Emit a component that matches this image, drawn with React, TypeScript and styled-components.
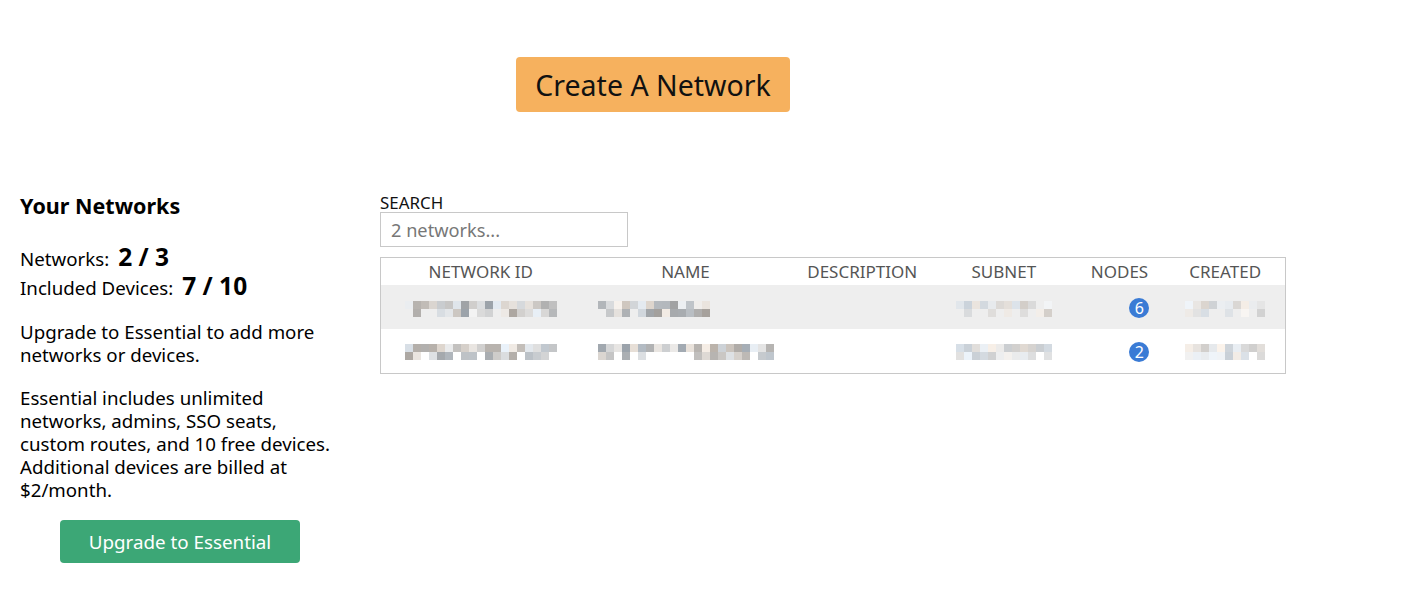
import styled, { createGlobalStyle } from 'styled-components';

const GlobalStyle = createGlobalStyle`
  html, body {
    margin: 0;
    padding: 0;
    background: #fff;
    font-family: 'Noto Sans', 'Open Sans', sans-serif;
    color: #000;
  }
`;

const Page = styled.div`
  width: 1412px;
  min-height: 598px;
`;

const TopBar = styled.div`
  padding: 57px 0 0 516px;
  height: 189px;
  box-sizing: border-box;
`;

const CreateButton = styled.button`
  width: 274px;
  height: 55px;
  border: none;
  border-radius: 4px;
  background: #f6b15e;
  color: #111;
  font-family: inherit;
  font-size: 28.5px;
  cursor: pointer;
`;

const Body = styled.div`
  display: flex;
  gap: 42px;
`;

const Sidebar = styled.aside`
  width: 318px;
  padding-left: 20px;
  flex-shrink: 0;
  font-size: 18.7px;
  line-height: 23px;
`;

const Title = styled.h2`
  margin: 0;
  padding-top: 3px;
  font-size: 21.5px;
  line-height: 28px;
  font-weight: 700;
`;

const Stats = styled.div`
  margin-top: 22px;
`;

const Stat = styled.div`
  display: flex;
  align-items: baseline;
  gap: 9px;
  height: 29px;
  line-height: 29px;
`;

const StatValue = styled.b`
  font-size: 24.5px;
`;

const Para = styled.p<{ $gap: number }>`
  margin: ${(p) => p.$gap}px 0 0;
`;

const UpgradeButton = styled.button`
  display: block;
  margin: 19px 0 0 40px;
  width: 240px;
  height: 43px;
  border: none;
  border-radius: 4px;
  background: #3ca776;
  color: #fff;
  font-family: inherit;
  font-size: 18.8px;
  cursor: pointer;
`;

const Main = styled.main`
  padding-top: 4px;
  width: 906px;
`;

const SearchLabel = styled.label`
  display: block;
  font-size: 16.9px;
  line-height: 19px;
  color: #111;
`;

const SearchInput = styled.input`
  display: block;
  box-sizing: border-box;
  width: 248px;
  height: 35px;
  margin: 0;
  padding: 0 10px;
  border: 1px solid #c8c8c8;
  font-family: inherit;
  font-size: 18.2px;
  color: #333;
  &::placeholder {
    color: #777;
  }
`;

const Table = styled.table`
  margin-top: 10px;
  width: 906px;
  border: 1px solid #c8c8c8;
  border-collapse: collapse;
`;

const Th = styled.th<{ $w: number }>`
  width: ${(p) => p.$w}px;
  height: 27px;
  padding: 0;
  font-weight: 400;
  font-size: 17px;
  color: #555;
  text-align: center;
  vertical-align: middle;
`;

const Row = styled.tr<{ $shade?: boolean }>`
  height: 44px;
  background: ${(p) => (p.$shade ? '#eeeeee' : '#fff')};
`;

const Td = styled.td<{ $align?: string; $pad?: number }>`
  padding: 0 0 0 ${(p) => p.$pad || 0}px;
  text-align: ${(p) => p.$align || 'center'};
  vertical-align: middle;
`;

const Badge = styled.span`
  display: inline-flex;
  align-items: center;
  justify-content: center;
  width: 20px;
  height: 20px;
  border-radius: 50%;
  background: #3a7bd5;
  color: #fff;
  font-size: 16px;
  margin-right: 16px;
  vertical-align: middle;
`;

const Blur = styled.svg`
  display: inline-block;
  vertical-align: middle;
`;

function Mosaic({ seed, cells, light }: { seed: number; cells: number; light?: boolean }) {
  let s = seed;
  const rnd = () => {
    s = (s * 9301 + 49297) % 233280;
    return s / 233280;
  };
  const rects = [];
  for (let r = 0; r < 2; r++) {
    for (let c = 0; c < cells; c++) {
      const v = rnd();
      if (r === 1 && v > 0.7) continue;
      const base = light ? 205 : 160;
      const g = Math.round(base + rnd() * (255 - base - 10));
      const tint = Math.round((rnd() - 0.5) * 16);
      rects.push(
        <rect
          key={`${r}-${c}`}
          x={c * 8}
          y={r * 8}
          width={8}
          height={8}
          fill={`rgb(${g + tint},${g},${g - tint})`}
        />
      );
    }
  }
  return (
    <Blur width={cells * 8} height={16} viewBox={`0 0 ${cells * 8} 16`}>
      {rects}
    </Blur>
  );
}

const cols = [200, 210, 144, 140, 92, 120];
const headers = ['NETWORK ID', 'NAME', 'DESCRIPTION', 'SUBNET', 'NODES', 'CREATED'];

const rows = [
  { id: 11, name: 21, subnet: 31, nodes: 6, created: 41, nameCells: 14 },
  { id: 12, name: 22, subnet: 32, nodes: 2, created: 42, nameCells: 22 },
];

export default function App() {
  return (
    <Page>
      <GlobalStyle />
      <TopBar>
        <CreateButton>Create A Network</CreateButton>
      </TopBar>
      <Body>
        <Sidebar>
          <Title>Your Networks</Title>
          <Stats>
            <Stat>
              Networks: <StatValue>2 / 3</StatValue>
            </Stat>
            <Stat>
              Included Devices: <StatValue>7 / 10</StatValue>
            </Stat>
          </Stats>
          <Para $gap={20}>Upgrade to Essential to add more networks or devices.</Para>
          <Para $gap={20}>
            Essential includes unlimited networks, admins, SSO seats, custom routes, and 10 free
            devices. Additional devices are billed at $2/month.
          </Para>
          <UpgradeButton>Upgrade to Essential</UpgradeButton>
        </Sidebar>
        <Main>
          <SearchLabel>SEARCH</SearchLabel>
          <SearchInput placeholder="2 networks..." />
          <Table>
            <thead>
              <tr>
                {headers.map((h, i) => (
                  <Th key={h} $w={cols[i]}>
                    {h}
                  </Th>
                ))}
              </tr>
            </thead>
            <tbody>
              {rows.map((r, i) => (
                <Row key={r.id} $shade={i === 0}>
                  <Td>
                    <Mosaic seed={r.id} cells={19} />
                  </Td>
                  <Td $align="left" $pad={17}>
                    <Mosaic seed={r.name} cells={r.nameCells} />
                  </Td>
                  <Td />
                  <Td>
                    <Mosaic seed={r.subnet} cells={12} light />
                  </Td>
                  <Td $align="right">
                    <Badge>{r.nodes}</Badge>
                  </Td>
                  <Td>
                    <Mosaic seed={r.created} cells={10} light />
                  </Td>
                </Row>
              ))}
            </tbody>
          </Table>
        </Main>
      </Body>
    </Page>
  );
}
